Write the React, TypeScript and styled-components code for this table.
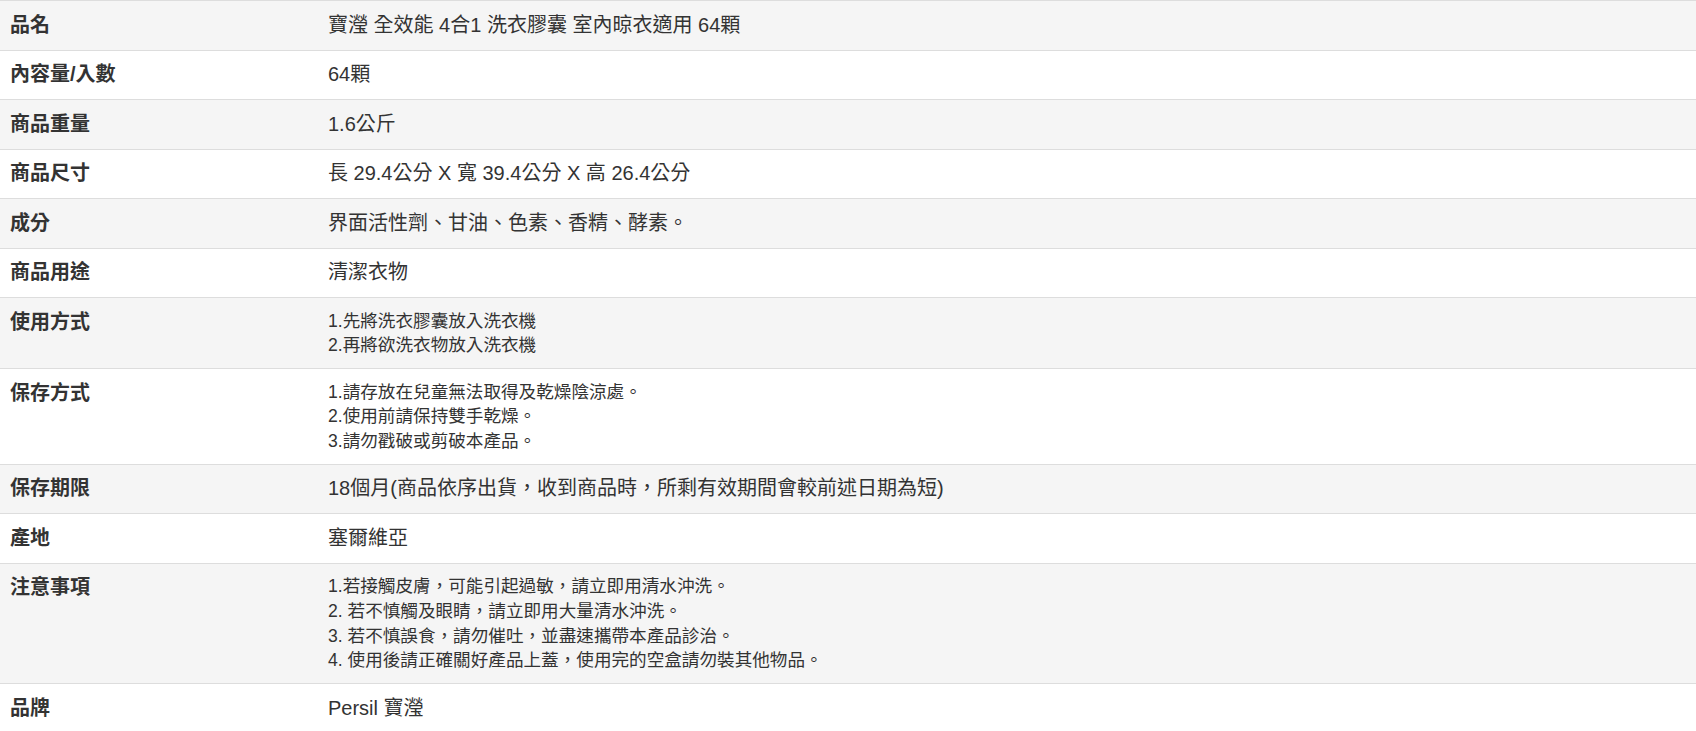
import React from "react";
import styled, { createGlobalStyle } from "styled-components";

const GlobalStyle = createGlobalStyle`
  html, body {
    margin: 0;
    padding: 0;
    background: #ffffff;
  }
  body {
    font-family: "Liberation Sans", Arial, "Noto Sans CJK TC", sans-serif;
    color: #333333;
  }
`;

const SpecTable = styled.table`
  width: 100%;
  border-collapse: collapse;
  border-spacing: 0;
  font-family: "Liberation Sans", Arial, "Noto Sans CJK TC", sans-serif;
  color: #333333;
`;

const Row = styled.tr`
  &:nth-child(odd) {
    background: #f5f5f5;
  }
  &:nth-child(even) {
    background: #ffffff;
  }
`;

const LabelCell = styled.th`
  width: 302px;
  padding: 10.5px 8px 10.5px 10px;
  border-top: 1px solid #dddddd;
  text-align: left;
  vertical-align: top;
  font-size: 20px;
  font-weight: 700;
  line-height: 27.5px;
`;

const ValueCell = styled.td`
  padding: 10.5px 8px;
  border-top: 1px solid #dddddd;
  text-align: left;
  vertical-align: top;
  font-size: 20px;
  font-weight: 400;
  line-height: 27.5px;
`;

const Line = styled.div`
  font-size: 17.6px;
  line-height: 24.6px;
`;

type Spec = { label: string; value: string | string[] };

const specs: Spec[] = [
  { label: "品名", value: "寶瀅 全效能 4合1 洗衣膠囊 室內晾衣適用 64顆" },
  { label: "內容量/入數", value: "64顆" },
  { label: "商品重量", value: "1.6公斤" },
  { label: "商品尺寸", value: "長 29.4公分 X 寬 39.4公分 X 高 26.4公分" },
  { label: "成分", value: "界面活性劑、甘油、色素、香精、酵素。" },
  { label: "商品用途", value: "清潔衣物" },
  { label: "使用方式", value: ["1.先將洗衣膠囊放入洗衣機", "2.再將欲洗衣物放入洗衣機"] },
  {
    label: "保存方式",
    value: [
      "1.請存放在兒童無法取得及乾燥陰涼處。",
      "2.使用前請保持雙手乾燥。",
      "3.請勿戳破或剪破本產品。",
    ],
  },
  { label: "保存期限", value: "18個月(商品依序出貨，收到商品時，所剩有效期間會較前述日期為短)" },
  { label: "產地", value: "塞爾維亞" },
  {
    label: "注意事項",
    value: [
      "1.若接觸皮膚，可能引起過敏，請立即用清水沖洗。",
      "2. 若不慎觸及眼睛，請立即用大量清水沖洗。",
      "3. 若不慎誤食，請勿催吐，並盡速攜帶本產品診治。",
      "4. 使用後請正確關好產品上蓋，使用完的空盒請勿裝其他物品。",
    ],
  },
  { label: "品牌", value: "Persil 寶瀅" },
];

export default function App() {
  return (
    <>
      <GlobalStyle />
      <SpecTable>
        <tbody>
          {specs.map((s) => (
            <Row key={s.label}>
              <LabelCell>{s.label}</LabelCell>
              <ValueCell>
                {Array.isArray(s.value)
                  ? s.value.map((line) => <Line key={line}>{line}</Line>)
                  : s.value}
              </ValueCell>
            </Row>
          ))}
        </tbody>
      </SpecTable>
    </>
  );
}
